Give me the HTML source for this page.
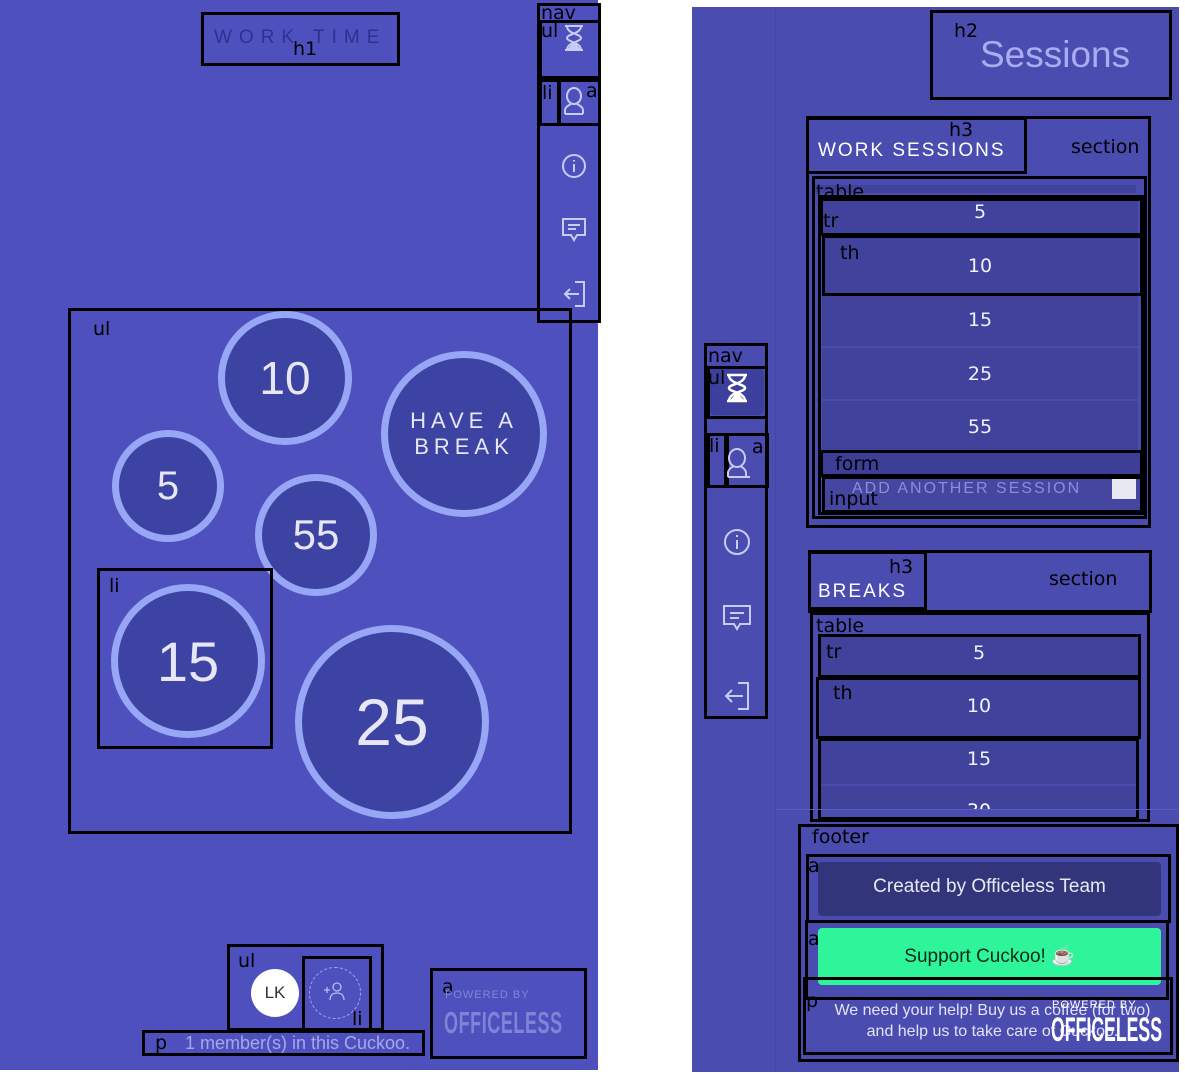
<!DOCTYPE html>
<html><head><meta charset="utf-8"><style>
*{margin:0;padding:0;box-sizing:border-box}
body{width:1185px;height:1076px;background:#fff;position:relative;overflow:hidden;font-family:"Liberation Sans",sans-serif}
.a{position:absolute}
.b{position:absolute;border:3px solid #000}
.l{position:absolute;color:#000;font-size:19px;font-family:"DejaVu Sans","Liberation Sans",sans-serif;line-height:1}
.c{position:absolute;border-radius:50%;background:#3d43a3;border:7px solid #97a6f5;color:#e6e6f5;display:flex;align-items:center;justify-content:center}
.row{position:absolute;left:822px;width:316px;background:#40429c;color:#f0f0ff;font-size:19px;font-family:"DejaVu Sans",sans-serif;text-align:center}
svg{position:absolute}
</style></head><body>
<!-- left panel -->
<div class="a" style="left:0;top:0;width:598px;height:1070px;background:#4e50bd"></div>
<div class="b" style="left:201px;top:12px;width:199px;height:54px"></div>
<div class="a" style="left:214px;top:27px;font-size:19px;letter-spacing:7px;color:#2e3190">WORK TIME</div>
<div class="l" style="left:293px;top:40px">h1</div>

<!-- left nav -->
<div class="b" style="left:537px;top:3px;width:64px;height:320px"></div>
<div class="b" style="left:539px;top:20px;width:62px;height:59px"></div>
<div class="b" style="left:539px;top:79px;width:21px;height:47px"></div>
<div class="b" style="left:558px;top:79px;width:43px;height:47px"></div>
<div class="l" style="left:541px;top:4px">nav</div>
<div class="l" style="left:541px;top:22px">ul</div>
<div class="l" style="left:542px;top:84px">li</div>
<div class="l" style="left:586px;top:82px">a</div>
<svg style="left:562px;top:24px" width="24" height="28" viewBox="0 0 24 28" fill="none" stroke="#c8ccf5" stroke-width="2"><path d="M3 2h18M3 26h18M5 2c0 8 14 8 14 12s-14 4-14 12M19 2c0 8-14 8-14 12s14 4 14 12"/><path d="M7 25l5-6 5 6z" fill="#c8ccf5"/></svg>
<svg style="left:562px;top:86px" width="24" height="30" viewBox="0 0 24 30" fill="none" stroke="#c8ccf5" stroke-width="2"><ellipse cx="12" cy="10" rx="7" ry="8"/><path d="M3 28v-4c0-3 4-5 6-6M21 28v-4c0-3-4-5-6-6M3 28h18"/></svg>
<svg style="left:561px;top:153px" width="26" height="26" viewBox="0 0 26 26" fill="none" stroke="#c8ccf5" stroke-width="2"><circle cx="13" cy="13" r="11"/><path d="M13 11v8M13 7v1.5"/></svg>
<svg style="left:561px;top:216px" width="26" height="28" viewBox="0 0 26 28" fill="none" stroke="#c8ccf5" stroke-width="2"><path d="M2 3h22v16H16l-3 5-3-5H2z"/><path d="M7 9h12M7 13h8"/></svg>
<svg style="left:561px;top:280px" width="26" height="28" viewBox="0 0 26 28" fill="none" stroke="#c8ccf5" stroke-width="2"><path d="M14 2h9v24h-9"/><path d="M18 14H4M9 9l-5 5 5 5"/></svg>

<!-- circles -->
<div class="b" style="left:68px;top:308px;width:504px;height:526px"></div>
<div class="l" style="left:93px;top:320px">ul</div>
<div class="c" style="left:218px;top:311px;width:134px;height:134px;font-size:46px">10</div>
<div class="c" style="left:381px;top:351px;width:166px;height:166px;font-size:22px;letter-spacing:5px;text-align:center;line-height:26px">HAVE A<br>BREAK</div>
<div class="c" style="left:112px;top:430px;width:112px;height:112px;font-size:40px">5</div>
<div class="c" style="left:255px;top:474px;width:122px;height:122px;font-size:42px">55</div>
<div class="c" style="left:111px;top:584px;width:154px;height:154px;font-size:56px">15</div>
<div class="c" style="left:295px;top:625px;width:194px;height:194px;font-size:66px">25</div>
<div class="b" style="left:97px;top:568px;width:176px;height:181px"></div>
<div class="l" style="left:109px;top:577px">li</div>

<!-- bottom members -->
<div class="b" style="left:227px;top:944px;width:157px;height:87px"></div>
<div class="l" style="left:238px;top:952px">ul</div>
<div class="a" style="left:251px;top:969px;width:48px;height:48px;border-radius:50%;background:#fff;color:#333;font-size:17px;display:flex;align-items:center;justify-content:center">LK</div>
<div class="a" style="left:309px;top:967px;width:52px;height:52px;border-radius:50%;border:1px dashed #9fa5e8"></div>
<svg style="left:322px;top:980px" width="26" height="24" viewBox="0 0 26 24" fill="none" stroke="#b8bdf0" stroke-width="1.3"><circle cx="15" cy="7" r="4"/><path d="M8 20c0-5 3-7 7-7s7 2 7 7M2 10h6M5 7v6"/></svg>
<div class="b" style="left:302px;top:956px;width:70px;height:75px"></div>
<div class="l" style="left:352px;top:1010px">li</div>
<div class="b" style="left:142px;top:1030px;width:283px;height:26px"></div>
<div class="l" style="left:155px;top:1034px">p</div>
<div class="a" style="left:185px;top:1033px;font-size:18px;color:#a4a9ea">1 member(s) in this Cuckoo.</div>
<div class="b" style="left:430px;top:968px;width:157px;height:91px"></div>
<div class="l" style="left:442px;top:978px">a</div>
<div class="a" style="left:445px;top:989px;font-size:11px;color:#8186d4;letter-spacing:1px">POWERED BY</div>
<div class="a" style="left:444px;top:1005px;font-size:31px;color:#7f84d6;font-weight:bold;transform:scaleX(.58);transform-origin:left;letter-spacing:1px;white-space:nowrap">OFFICELESS</div>

<!-- right panel -->
<div class="a" style="left:692px;top:7px;width:487px;height:1065px;background:#4a4cb0"></div>
<div class="a" style="left:775px;top:7px;width:1px;height:1065px;background:#4346a6"></div>
<div class="b" style="left:930px;top:10px;width:242px;height:90px"></div>
<div class="l" style="left:954px;top:22px">h2</div>
<div class="a" style="left:980px;top:34px;font-size:37px;color:#a9acef">Sessions</div>

<div class="b" style="left:806px;top:116px;width:345px;height:412px"></div>
<div class="b" style="left:806px;top:117px;width:221px;height:57px"></div>
<div class="l" style="left:949px;top:121px">h3</div>
<div class="a" style="left:818px;top:140px;font-size:19px;color:#fff;letter-spacing:2px">WORK SESSIONS</div>
<div class="l" style="left:1071px;top:138px">section</div>
<div class="b" style="left:812px;top:176px;width:335px;height:343px"></div>
<div class="a" style="left:815px;top:185px;width:321px;height:8px;background:#40429c"></div>
<div class="l" style="left:816px;top:183px">table</div>
<div class="row" style="top:200px;height:33px;line-height:24px">5</div>
<div class="row" style="top:237px;height:58px;line-height:58px">10</div>
<div class="row" style="top:295px;height:52px;line-height:50px;border-bottom:1px solid #4a4cb0">15</div>
<div class="row" style="top:348px;height:52px;line-height:52px;border-bottom:1px solid #4a4cb0">25</div>
<div class="row" style="top:401px;height:52px;line-height:52px">55</div>
<div class="b" style="left:820px;top:198px;width:323px;height:38px"></div>
<div class="b" style="left:822px;top:235px;width:321px;height:61px"></div>
<div class="b" style="left:818px;top:195px;width:326px;height:320px;border-width:3px"></div>
<div class="l" style="left:823px;top:212px">tr</div>
<div class="l" style="left:840px;top:244px">th</div>
<div class="a" style="left:820px;top:453px;width:322px;height:22px;background:#3c3e98"></div>
<div class="b" style="left:820px;top:450px;width:323px;height:27px"></div>
<div class="l" style="left:835px;top:455px">form</div>
<div class="a" style="left:824px;top:478px;width:316px;height:34px;background:#44469f"></div>
<div class="a" style="left:852px;top:480px;font-size:16px;color:#8a8ed8;letter-spacing:2px">ADD ANOTHER SESSION</div>
<div class="a" style="left:1112px;top:479px;width:24px;height:20px;background:#e8e8f0"></div>
<div class="b" style="left:822px;top:476px;width:321px;height:37px"></div>
<div class="l" style="left:829px;top:490px">input</div>

<div class="b" style="left:808px;top:550px;width:344px;height:63px"></div>
<div class="b" style="left:808px;top:551px;width:119px;height:59px"></div>
<div class="l" style="left:889px;top:558px">h3</div>
<div class="a" style="left:818px;top:581px;font-size:19px;color:#fff;letter-spacing:2px">BREAKS</div>
<div class="l" style="left:1049px;top:570px">section</div>
<div class="b" style="left:810px;top:612px;width:340px;height:210px"></div>
<div class="l" style="left:816px;top:617px">table</div>
<div class="row" style="left:820px;width:318px;top:636px;height:40px;line-height:34px">5</div>
<div class="row" style="left:820px;width:318px;top:680px;height:58px;line-height:52px">10</div>
<div class="row" style="left:820px;width:318px;top:740px;height:45px;line-height:38px;border-bottom:1px solid #4a4cb0">15</div>
<div class="a" style="left:820px;top:786px;width:318px;height:23px;overflow:hidden;background:#40429c;color:#fff;font-size:19px;font-family:'DejaVu Sans',sans-serif;text-align:center;line-height:50px">30</div>
<div class="b" style="left:818px;top:634px;width:323px;height:44px"></div>
<div class="b" style="left:816px;top:677px;width:325px;height:62px"></div>
<div class="b" style="left:818px;top:738px;width:321px;height:82px"></div>
<div class="l" style="left:826px;top:643px">tr</div>
<div class="l" style="left:833px;top:684px">th</div>

<!-- footer -->
<div class="a" style="left:776px;top:809px;width:403px;height:1px;background:#5a5cc0"></div>
<div class="b" style="left:798px;top:824px;width:381px;height:238px"></div>
<div class="l" style="left:812px;top:828px">footer</div>
<div class="b" style="left:806px;top:854px;width:365px;height:69px"></div>
<div class="a" style="left:818px;top:862px;width:343px;height:54px;border-radius:4px;background:#33357a;color:#e8e8f5;font-size:19px;text-align:center;line-height:50px">Created by Officeless Team</div>
<div class="l" style="left:808px;top:857px">a</div>
<div class="b" style="left:805px;top:920px;width:364px;height:80px"></div>
<div class="a" style="left:818px;top:928px;width:343px;height:57px;border-radius:4px;background:#2ef59a;color:#0c2a1a;font-size:19px;text-align:center;line-height:57px">Support Cuckoo! ☕</div>
<div class="l" style="left:808px;top:930px">a</div>
<div class="b" style="left:803px;top:977px;width:370px;height:78px"></div>
<div class="l" style="left:806px;top:992px">p</div>
<div class="a" style="left:820px;top:1000px;width:345px;font-size:16px;color:#e4e4f8;text-align:center;line-height:21px">We need your help! Buy us a coffee (for two)<br>and help us to take care of Cuckoo.</div>
<div class="a" style="left:1052px;top:999px;font-size:11px;color:#fff;letter-spacing:1px">POWERED BY</div>
<div class="a" style="left:1051px;top:1011px;font-size:34px;color:#fff;font-weight:bold;transform:scaleX(.52);transform-origin:left;white-space:nowrap">OFFICELESS</div>

<!-- right nav -->
<div class="b" style="left:704px;top:343px;width:64px;height:376px"></div>
<div class="a" style="left:709px;top:368px;width:55px;height:47px;border-radius:6px;background:#3d3f9c"></div>
<div class="b" style="left:707px;top:366px;width:61px;height:53px"></div>
<div class="b" style="left:707px;top:433px;width:20px;height:55px"></div>
<div class="b" style="left:726px;top:433px;width:43px;height:55px"></div>
<div class="l" style="left:708px;top:347px">nav</div>
<div class="l" style="left:708px;top:369px">ul</div>
<div class="l" style="left:709px;top:437px">li</div>
<div class="l" style="left:752px;top:438px">a</div>
<svg style="left:725px;top:373px" width="24" height="30" viewBox="0 0 24 30" fill="none" stroke="#fff" stroke-width="2.5"><path d="M2 2h20M2 28h20M4 2c0 9 16 9 16 13s-16 4-16 13M20 2c0 9-16 9-16 13s16 4 16 13"/><path d="M7 27l5-6 5 6z" fill="#fff"/></svg>
<svg style="left:725px;top:446px" width="26" height="34" viewBox="0 0 26 34" fill="none" stroke="#c8ccf5" stroke-width="2"><ellipse cx="12" cy="12" rx="8" ry="9"/><path d="M3 31v-4c0-4 4-6 6-7M21 31v-4c0-4-4-6-6-7M3 31h22"/></svg>
<svg style="left:723px;top:528px" width="28" height="28" viewBox="0 0 28 28" fill="none" stroke="#c8ccf5" stroke-width="2"><circle cx="14" cy="14" r="12"/><path d="M14 12v9M14 7v2"/></svg>
<svg style="left:722px;top:603px" width="30" height="30" viewBox="0 0 30 30" fill="none" stroke="#c8ccf5" stroke-width="2"><path d="M2 3h26v18H18l-3 5-3-5H2z"/><path d="M8 10h14M8 15h9"/></svg>
<svg style="left:722px;top:681px" width="30" height="30" viewBox="0 0 30 30" fill="none" stroke="#c8ccf5" stroke-width="2"><path d="M16 2h10v26H16"/><path d="M21 15H4M10 9l-6 6 6 6"/></svg>
</body></html>
